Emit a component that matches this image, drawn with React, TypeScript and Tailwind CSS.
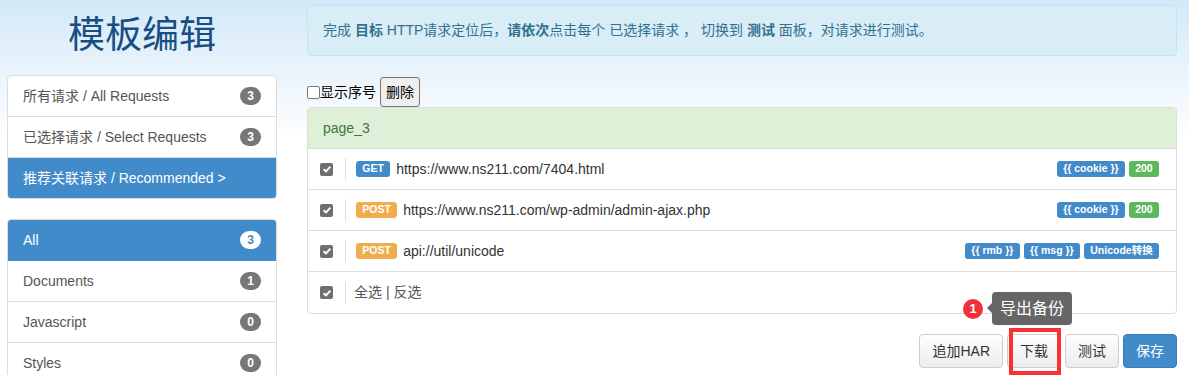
import React from "react";

const font = "font-['Liberation_Sans','Noto_Sans_CJK_SC',sans-serif]";

type Label = { text: string; color: string };

const requests: { method: string; url: string; labels: Label[] }[] = [
  {
    method: "GET",
    url: "https://www.ns211.com/7404.html",
    labels: [
      { text: "{{ cookie }}", color: "bg-[#428bca]" },
      { text: "200", color: "bg-[#5cb85c]" },
    ],
  },
  {
    method: "POST",
    url: "https://www.ns211.com/wp-admin/admin-ajax.php",
    labels: [
      { text: "{{ cookie }}", color: "bg-[#428bca]" },
      { text: "200", color: "bg-[#5cb85c]" },
    ],
  },
  {
    method: "POST",
    url: "api://util/unicode",
    labels: [
      { text: "{{ rmb }}", color: "bg-[#428bca]" },
      { text: "{{ msg }}", color: "bg-[#428bca]" },
      { text: "Unicode转换", color: "bg-[#428bca]" },
    ],
  },
];

function Badge({ n, active }: { n: number; active?: boolean }) {
  return (
    <span
      className={
        "inline-block rounded-[10px] px-[7px] py-[3px] text-[12px] leading-[12px] font-bold " +
        (active ? "bg-white text-[#428bca]" : "bg-[#777] text-white")
      }
    >
      {n}
    </span>
  );
}

function ListItem({ label, n, active }: { label: string; n?: number; active?: boolean }) {
  return (
    <div
      className={
        "flex h-[41px] items-center justify-between border-b px-[15px] text-[14px] leading-[20px] last:h-[40px] last:border-b-0 " +
        (active ? "border-[#428bca] bg-[#428bca] text-white" : "border-[#ddd] text-[#555]")
      }
    >
      <span>{label}</span>
      {n !== undefined && <Badge n={n} active={active} />}
    </div>
  );
}

function Checked() {
  return (
    <span className="flex h-[13px] w-[13px] shrink-0 items-center justify-center rounded-[2px] bg-[#6f6f6f]">
      <svg width="10" height="10" viewBox="0 0 10 10">
        <path d="M1.6 5.2 L4 7.5 L8.4 2.6" stroke="white" strokeWidth="1.9" fill="none" />
      </svg>
    </span>
  );
}

function Btn({ children, primary }: { children: React.ReactNode; primary?: boolean }) {
  return (
    <button
      className={
        "h-[34px] rounded-[4px] border px-[12px] text-[14px] leading-[20px] " +
        (primary
          ? "border-[#357ebd] bg-[#428bca] text-white"
          : "border-[#ccc] bg-gradient-to-b from-white to-[#ececec] text-[#333]")
      }
    >
      {children}
    </button>
  );
}

export default function App() {
  return (
    <div
      className={
        "flex h-[375px] w-full gap-[30px] overflow-hidden bg-[linear-gradient(to_bottom,#d3e8f8,#ffffff_140px)] pl-[7px] text-[#333] " +
        font
      }
    >
      {/* left column */}
      <div className="w-[270px] shrink-0">
        <div className="flex h-[75px] items-center justify-center pb-[4px] text-[37px] leading-none text-[#174e85]">
          模板编辑
        </div>
        <div className="overflow-hidden rounded-[4px] border border-[#ddd] bg-white">
          <ListItem label="所有请求 / All Requests" n={3} />
          <ListItem label="已选择请求 / Select Requests" n={3} />
          <ListItem label="推荐关联请求 / Recommended >" active />
        </div>
        <div className="mt-[20px] overflow-hidden rounded-[4px] border border-[#ddd] bg-white">
          <ListItem label="All" n={3} active />
          <ListItem label="Documents" n={1} />
          <ListItem label="Javascript" n={0} />
          <ListItem label="Styles" n={0} />
        </div>
      </div>

      {/* right column */}
      <div className="w-[870px] shrink-0 pt-[5px]">
        <div className="rounded-[4px] border border-[#bce8f1] bg-[#d9edf7] px-[15px] py-[15px] text-[14px] leading-[19px] text-[#31708f]">
          完成 <b>目标</b> HTTP请求定位后，<b>请依次</b>点击每个 已选择请求 ， 切换到 <b>测试</b> 面板，对请求进行测试。
        </div>

        <div className="mt-[21px] flex h-[30px] items-center text-[14px] text-black">
          <span className="h-[13px] w-[13px] rounded-[2px] border border-[#767676] bg-white" />
          <span className="leading-[20px]">显示序号</span>
          <button className="ml-[4px] h-[30px] rounded-[3px] border border-[#767676] bg-[#efefef] px-[5px] text-[14px] leading-[20px] text-black">
            删除
          </button>
        </div>

        <div className="overflow-hidden rounded-[4px] border border-[#ddd] bg-white">
          <div className="flex h-[41px] items-center border-b border-[#ddd] bg-[#dff0d8] px-[15px] text-[14px] text-[#3c763d]">
            page_3
          </div>
          {requests.map((r) => (
            <div key={r.url} className="flex h-[41px] items-center border-b border-[#ddd] pl-[12px] pr-[17px]">
              <Checked />
              <div className="ml-[12px] flex h-[22px] flex-1 items-center border-l border-[#ddd] pl-[10px]">
                <span
                  className={
                    "rounded-[3px] px-[6.3px] pt-[2px] pb-[3px] text-[10.5px] leading-[11px] font-bold text-white " +
                    (r.method === "GET" ? "bg-[#428bca]" : "bg-[#f0ad4e]")
                  }
                >
                  {r.method}
                </span>
                <span className="ml-[6px] text-[14px] leading-[20px] text-[#333]">{r.url}</span>
                <div className="ml-auto flex gap-[4px]">
                  {r.labels.map((l) => (
                    <span
                      key={l.text}
                      className={"rounded-[3px] px-[6.3px] pt-[2px] pb-[3px] text-[10.5px] leading-[11px] font-bold text-white " + l.color}
                    >
                      {l.text}
                    </span>
                  ))}
                </div>
              </div>
            </div>
          ))}
          <div className="flex h-[41px] items-center pl-[12px]">
            <Checked />
            <div className="ml-[12px] flex h-[22px] items-center border-l border-[#ddd] pl-[8px] text-[14px] text-[#555]">
              全选 | 反选
            </div>
          </div>
        </div>

        <div className="mt-[20px] flex justify-end gap-[4px]">
          <Btn>追加HAR</Btn>
          <div className="relative">
            <Btn>下载</Btn>
            <div className="pointer-events-none absolute top-[-6px] bottom-[-7px] left-[2px] right-0 border-4 border-[#f63232]" />
            <div className="absolute top-[-35px] left-[-44px] flex h-[20px] w-[20px] items-center justify-center rounded-full bg-[#f2303a] text-[13px] font-bold text-white">
              1
            </div>
            <div className="absolute top-[-42px] left-[-15px] flex h-[33px] items-center rounded-[4px] bg-[#666] px-[8px] text-[16px] whitespace-nowrap text-white">
              <span className="absolute top-[11px] left-[-5px] h-0 w-0 border-y-[5px] border-r-[5px] border-y-transparent border-r-[#666]" />
              导出备份
            </div>
          </div>
          <Btn>测试</Btn>
          <Btn primary>保存</Btn>
        </div>
      </div>
    </div>
  );
}
